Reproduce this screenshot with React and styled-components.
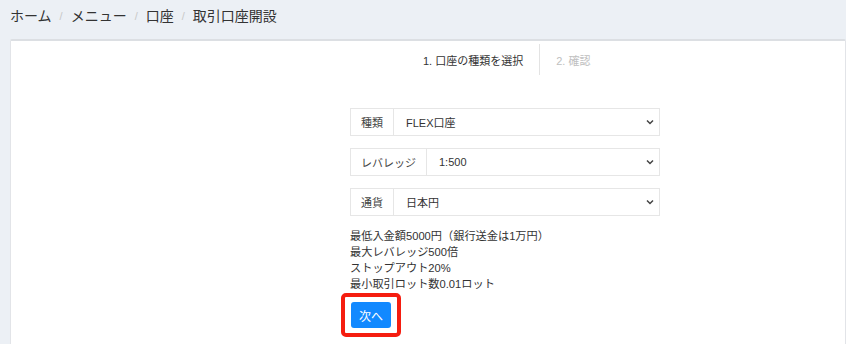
import styled, { createGlobalStyle } from "styled-components";

const GlobalStyle = createGlobalStyle`
  body {
    margin: 0;
    background: #ecf0f5;
    font-family: "Liberation Sans", "Noto Sans CJK JP", sans-serif;
    color: #333;
  }
`;

const Chevron = () => (
  <svg width="10" height="10" viewBox="0 0 10 10">
    <path d="M2 3.5 L5 6.5 L8 3.5" fill="none" stroke="#444" strokeWidth="1.5" />
  </svg>
);

const fields = [
  { label: "種類", value: "FLEX口座" },
  { label: "レバレッジ", value: "1:500" },
  { label: "通貨", value: "日本円" },
];

const notes = [
  "最低入金額5000円（銀行送金は1万円）",
  "最大レバレッジ500倍",
  "ストップアウト20%",
  "最小取引ロット数0.01ロット",
];

export default function App() {
  return (
    <>
      <GlobalStyle />
      <Breadcrumb>
        <Crumb>ホーム</Crumb>
        <Sep>/</Sep>
        <Crumb>メニュー</Crumb>
        <Sep>/</Sep>
        <Crumb>口座</Crumb>
        <Sep>/</Sep>
        <Crumb>取引口座開設</Crumb>
      </Breadcrumb>
      <Card>
        <Steps>
          <Step active>1. 口座の種類を選択</Step>
          <StepDivider />
          <Step>2. 確認</Step>
        </Steps>
        <Form>
          {fields.map((f) => (
            <InputGroup key={f.label}>
              <Addon>{f.label}</Addon>
              <SelectBox>
                <span>{f.value}</span>
                <Chevron />
              </SelectBox>
            </InputGroup>
          ))}
          <Notes>
            {notes.map((n) => (
              <li key={n}>{n}</li>
            ))}
          </Notes>
          <Highlight>
            <Button>次へ</Button>
          </Highlight>
        </Form>
      </Card>
    </>
  );
}

const Breadcrumb = styled.div`
  display: flex;
  align-items: center;
  padding: 6px 10px;
  font-size: 14px;
  line-height: 20px;
  color: #333;
`;

const Crumb = styled.span``;

const Sep = styled.span`
  color: #c8c8c8;
  font-size: 11px;
  padding: 0 8px;
`;

const Card = styled.div`
  margin: 7px 0 0 10px;
  height: 320px;
  background: #fff;
  border: 1px solid #e2e4e8;
  border-top: 2px solid #dcdfe3;
  border-radius: 2px;
`;

const Steps = styled.div`
  display: flex;
  align-items: center;
  padding: 3px 0 0 412px;
  height: 31px;
`;

const Step = styled.div`
  font-size: 11px;
  color: ${(p) => (p.active ? "#333" : "#c0c0c0")};
  padding: 0 16px 0 0;
`;

const StepDivider = styled.div`
  width: 1px;
  height: 31px;
  background: #e3e3e3;
  margin: 0 16px 0 0;
`;

const Form = styled.div`
  width: 310px;
  margin: 33px 0 0 339px;
  display: flex;
  flex-direction: column;
  align-items: flex-start;
`;

const InputGroup = styled.div`
  display: flex;
  width: 100%;
  height: 28px;
  border: 1px solid #e6e6e6;
  box-sizing: border-box;
  margin-bottom: 12px;
  font-size: 11px;

  &:last-of-type {
    margin-bottom: 10px;
  }
`;

const Addon = styled.div`
  display: flex;
  align-items: center;
  padding: 0 10px;
  border-right: 1px solid #e6e6e6;
  color: #444;
`;

const SelectBox = styled.div`
  flex: 1;
  display: flex;
  align-items: center;
  justify-content: space-between;
  padding: 0 4px 0 12px;
  color: #333;
`;

const Notes = styled.ul`
  list-style: none;
  margin: 0;
  padding: 0;
  font-size: 11.2px;
  line-height: 16px;
  color: #333;
`;

const Highlight = styled.div`
  margin: 1px 0 0 -9px;
  padding: 5px 6px;
  border: 4px solid #f51d10;
  border-radius: 5px;
`;

const Button = styled.div`
  width: 40px;
  height: 26px;
  display: flex;
  align-items: center;
  justify-content: center;
  background: #1289ff;
  color: #fff;
  font-size: 12px;
  border-radius: 3px;
`;
